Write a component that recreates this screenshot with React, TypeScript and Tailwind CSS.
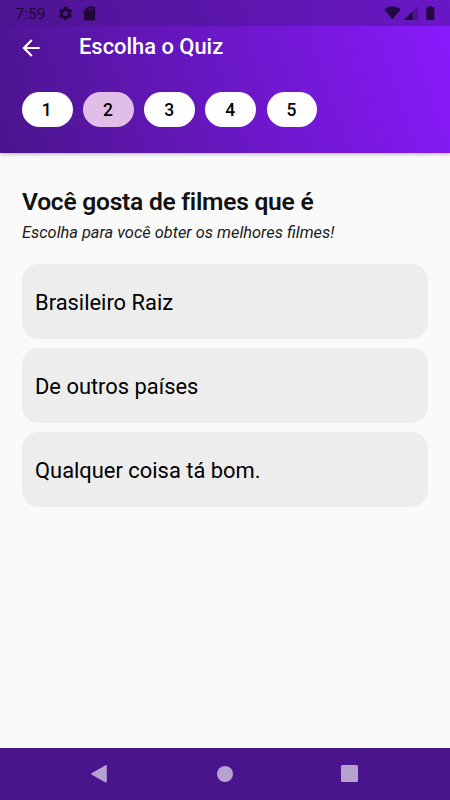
const chips = ['1', '2', '3', '4', '5'];
const answers = ['Brasileiro Raiz', 'De outros países', 'Qualquer coisa tá bom.'];

function StatusBar() {
  return (
    <div className="flex h-[26px] items-center bg-[#4a148c]/50 pl-[15.5px] pr-[15.5px] text-black/65">
      <span className="w-[41.500px] pt-[1.500px] text-[15.300px] leading-[26px] tracking-[0.100px]">7:59</span>
      <svg className="h-[17px] w-[17px]" viewBox="0 0 24 24" fill="currentColor">
        <path d="M19.14 12.94c.04-.3.06-.61.06-.94 0-.32-.02-.64-.07-.94l2.03-1.58c.18-.14.23-.41.12-.61l-1.92-3.32c-.12-.22-.37-.29-.59-.22l-2.39.96c-.5-.38-1.03-.7-1.62-.94l-.36-2.54c-.04-.24-.24-.41-.48-.41h-3.84c-.24 0-.43.17-.47.41l-.36 2.54c-.59.24-1.13.57-1.62.94l-2.39-.96c-.22-.08-.47 0-.59.22L2.74 8.87c-.12.21-.08.47.12.61l2.03 1.58c-.05.3-.09.63-.09.94s.02.64.07.94l-2.03 1.58c-.18.14-.23.41-.12.61l1.92 3.32c.12.22.37.29.59.22l2.39-.96c.5.38 1.03.7 1.62.94l.36 2.54c.05.24.24.41.48.41h3.84c.24 0 .44-.17.47-.41l.36-2.54c.59-.24 1.13-.56 1.62-.94l2.39.96c.22.08.47 0 .59-.22l1.92-3.32c.12-.22.07-.47-.12-.61l-2.01-1.58zM12 15.6A3.600 3.600 0 1 1 12 8.400a3.600 3.600 0 0 1 0 7.200z" />
      </svg>
      <svg className="ml-[7px] h-[17px] w-[17px]" viewBox="0 0 24 24" fill="currentColor">
        <path d="M18 2h-8L4.020 8 4 20c0 1.100.9 2 2 2h12c1.100 0 2-.9 2-2V4c0-1.100-.9-2-2-2z" />
        <path fill="#4a148c" opacity=".65" d="M10 4h2v4h-2zM13 4h2v4h-2zM16 4h2v4h-2z" />
      </svg>
      <svg className="ml-auto h-[14px] w-[17px]" viewBox="0 0 17 14" fill="currentColor">
        <path d="M0.200 3.300Q8.500-2.700 16.800 3.300L8.500 13.600Z" />
      </svg>
      <svg className="ml-[2.500px] h-[14px] w-[14px]" viewBox="0 0 14 14" fill="currentColor">
        <path opacity=".35" d="M0 14 14 0V14Z" />
        <path d="M0 14 8.500 5.500V14Z" />
      </svg>
      <svg className="ml-[8px] h-[14px] w-[9px]" viewBox="0 0 9 14" fill="currentColor">
        <path d="M1 1.300h1.700V0h3.200v1.300h1.700q.8 0 .8.8v11q0 .8-.8.8H1q-.8 0-.8-.8v-11q0-.8.8-.8Z" />
      </svg>
    </div>
  );
}

function Header() {
  return (
    <header className="relative h-[153px] bg-[linear-gradient(71.2deg,#4a148c,#8a1aff)] shadow-[0_1px_4px_rgba(0,0,0,0.3)]">
      <StatusBar />
      <div className="flex h-[42px] items-center pl-[18px] text-white">
        <svg className="mt-[2px] h-[26px] w-[26px]" viewBox="0 0 24 24" fill="currentColor">
          <path d="M20 11H7.830l5.590-5.590L12 4l-8 8 8 8 1.410-1.410L7.830 13H20v-2z" />
        </svg>
        <h1 className="ml-[35px] text-[21.900px] leading-[26px] font-medium">Escolha o Quiz</h1>
      </div>
      <div className="flex gap-[10.300px] pt-[23.500px] pl-[21.800px]">
        {chips.map((chip) => (
          <button
            key={chip}
            className={`h-[35.300px] w-[50.900px] rounded-full pr-[1px] text-[17.500px] leading-[36px] font-medium text-black ${chip === '2' ? 'bg-[#e1bee7]' : 'bg-white'}`}
          >
            {chip}
          </button>
        ))}
      </div>
    </header>
  );
}

export default function App() {
  return (
    <div className="flex h-[800px] w-[450px] flex-col overflow-hidden bg-[#fafafa] font-[Roboto,sans-serif]">
      <Header />
      <main className="flex-1 px-[22px] pt-[34px]">
        <h2 className="text-[24.600px] leading-[29px] font-semibold tracking-[-0.250px] whitespace-nowrap text-[#121212]">
          Você gosta de filmes que é
        </h2>
        <p className="mt-[7px] text-[16.400px] leading-[20px] whitespace-nowrap italic text-[#202020]">
          Escolha para você obter os melhores filmes!
        </p>
        <div className="mt-[21px] flex flex-col gap-[9px]">
          {answers.map((answer) => (
            <button key={answer} className="h-[75px] rounded-[16.400px] bg-[#ededed] px-[13px] pt-[3px] text-left text-[21.900px] text-black">
              {answer}
            </button>
          ))}
        </div>
      </main>
      <nav className="flex h-[52.500px] items-center bg-[#4a148c] pl-[91px] text-white/60">
        <svg className="h-[18px] w-[16px]" viewBox="0 0 16 18" fill="currentColor">
          <path d="M.5 8.300 14.500.2q1.300-.6 1.300.7v15.900q0 1.200-1.300.6L.5 9.500q-.9-.6 0-1.200Z" />
        </svg>
        <span className="ml-[110px] h-4 w-4 rounded-full bg-current" />
        <span className="ml-[108px] h-[17px] w-[17px] rounded-[1.500px] bg-current" />
      </nav>
    </div>
  );
}
